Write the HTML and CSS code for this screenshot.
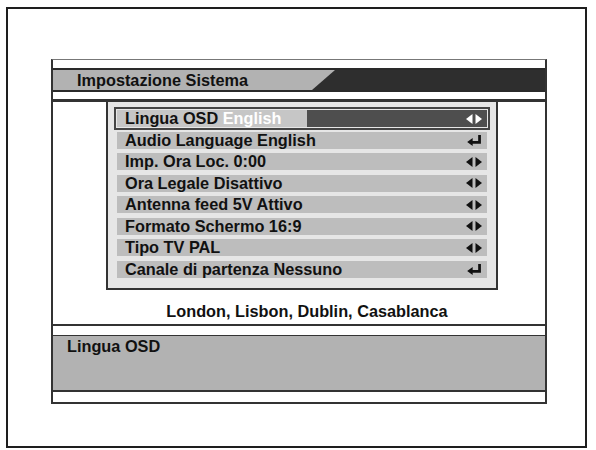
FILE: index.html
```html
<!DOCTYPE html>
<html>
<head>
<meta charset="utf-8">
<link rel="stylesheet" href="styles.css">
</head>
<body>
<div class="frame">
  <div class="panel">
    <div class="strip-top"></div>
    <div class="title">
      <div class="title-label">Impostazione Sistema</div>
    </div>
    <div class="strip-mid"></div>
    <div class="sep"></div>
    <div class="menu">
      <div class="row row-active">
        <span class="label">Lingua OSD <span class="value-active">English</span></span>
        <svg class="icon icon-lr" viewBox="0 0 16 10"><polygon points="0,5 6.5,0 6.5,10"/><polygon points="9.5,0 16,5 9.5,10"/></svg>
      </div>
      <div class="row">
        <span class="label">Audio Language English</span>
        <svg class="icon icon-enter" viewBox="0 0 16 12"><path d="M12 0h3v9.5H6V12L0 7.7 6 3.4V6.5h6z"/></svg>
      </div>
      <div class="row">
        <span class="label">Imp. Ora Loc. 0:00</span>
        <svg class="icon icon-lr" viewBox="0 0 16 10"><polygon points="0,5 6.5,0 6.5,10"/><polygon points="9.5,0 16,5 9.5,10"/></svg>
      </div>
      <div class="row">
        <span class="label">Ora Legale Disattivo</span>
        <svg class="icon icon-lr" viewBox="0 0 16 10"><polygon points="0,5 6.5,0 6.5,10"/><polygon points="9.5,0 16,5 9.5,10"/></svg>
      </div>
      <div class="row">
        <span class="label">Antenna feed 5V Attivo</span>
        <svg class="icon icon-lr" viewBox="0 0 16 10"><polygon points="0,5 6.5,0 6.5,10"/><polygon points="9.5,0 16,5 9.5,10"/></svg>
      </div>
      <div class="row">
        <span class="label">Formato Schermo 16:9</span>
        <svg class="icon icon-lr" viewBox="0 0 16 10"><polygon points="0,5 6.5,0 6.5,10"/><polygon points="9.5,0 16,5 9.5,10"/></svg>
      </div>
      <div class="row">
        <span class="label">Tipo TV PAL</span>
        <svg class="icon icon-lr" viewBox="0 0 16 10"><polygon points="0,5 6.5,0 6.5,10"/><polygon points="9.5,0 16,5 9.5,10"/></svg>
      </div>
      <div class="row">
        <span class="label">Canale di partenza Nessuno</span>
        <svg class="icon icon-enter" viewBox="0 0 16 12"><path d="M12 0h3v9.5H6V12L0 7.7 6 3.4V6.5h6z"/></svg>
      </div>
    </div>
    <div class="city">London, Lisbon, Dublin, Casablanca</div>
    <div class="sep2"></div>
    <div class="strip-low"></div>
    <div class="help">Lingua OSD</div>
    <div class="strip-bottom"></div>
  </div>
</div>
</body>
</html>
```

FILE: styles.css
```css
html, body {
  margin: 0;
  padding: 0;
  background: #ffffff;
}

body {
  font-family: "Liberation Sans", Arial, sans-serif;
  font-weight: bold;
  font-size: 16.3px;
  color: #111111;
}

.frame {
  box-sizing: border-box;
  margin: 7px 0 0 6px;
  width: 581px;
  height: 441px;
  border: 2px solid #1e1e1e;
  padding: 50px 0 0 43px;
}

.panel {
  box-sizing: border-box;
  width: 496px;
  border-left: 2px solid #333333;
  border-right: 2px solid #333333;
  border-top: 1px solid #777777;
  border-bottom: 2px solid #333333;
  display: flex;
  flex-direction: column;
}

.strip-top {
  height: 8px;
}

.title {
  height: 24px;
  box-sizing: border-box;
  border-top: 2px solid #2a2a2a;
  border-bottom: 2px solid #2a2a2a;
  background: #2e2e2e;
  display: flex;
}

.title-label {
  width: 282px;
  height: 20px;
  background: #b2b2b2;
  clip-path: polygon(0 0, 100% 0, calc(100% - 23px) 100%, 0 100%);
  line-height: 20px;
  padding-left: 24px;
  box-sizing: border-box;
  color: #111111;
}

.strip-mid {
  height: 7px;
}

.sep {
  height: 3px;
  background: #333333;
}

.menu {
  box-sizing: border-box;
  margin-left: 53px;
  width: 392px;
  border: 2px solid #333333;
  border-top: none;
  background: #e6e6e6;
  padding: 8px 9px 10px 9px;
  display: flex;
  flex-direction: column;
  gap: 4.57px;
}

.row {
  height: 17px;
  background: #bdbdbd;
  display: flex;
  align-items: center;
  justify-content: space-between;
  padding: 0 5px 0 8px;
}

.label {
  line-height: 17px;
  white-space: nowrap;
}

.row-active {
  background: linear-gradient(to right, #c6c6c6 190px, #4e4e4e 190px);
  box-shadow: 0 0 0 1px #e6e6e6, 0 0 0 3px #444444;
}

.value-active {
  color: #ffffff;
}

.icon {
  fill: #111111;
  flex: none;
}

.icon-lr {
  width: 16px;
  height: 10px;
}

.icon-enter {
  width: 15px;
  height: 11px;
}

.row-active .icon {
  fill: #ffffff;
}

.city {
  height: 34px;
  box-sizing: border-box;
  padding: 11px 0 0 16px;
  line-height: 20px;
  text-align: center;
}

.sep2 {
  height: 2px;
  background: #333333;
}

.strip-low {
  height: 9px;
}

.help {
  height: 57px;
  box-sizing: border-box;
  border-top: 1px solid #333333;
  border-bottom: 2px solid #333333;
  background: #b2b2b2;
  padding: 1px 0 0 14px;
  line-height: 18px;
}

.strip-bottom {
  height: 10px;
}
```
